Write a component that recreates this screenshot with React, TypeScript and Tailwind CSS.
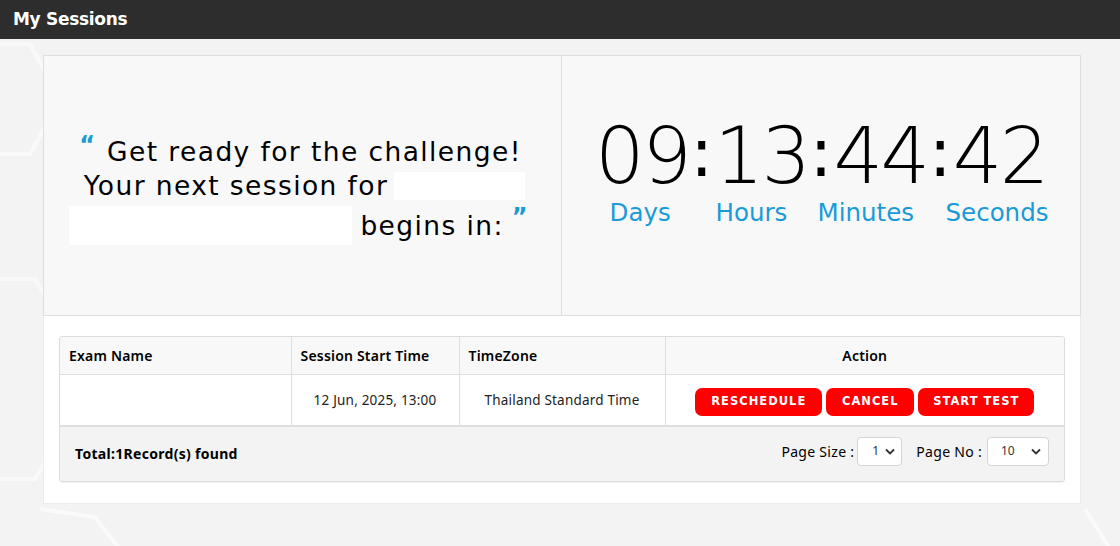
import React from "react";

const F = { fontFamily: '"DejaVu Sans", "Noto Sans", sans-serif' };
const T = { fontFamily: '"Noto Sans", "DejaVu Sans", sans-serif' };

export default function App() {
  return (
    <div className="w-[1120px] h-[546px] bg-[#f3f3f3] overflow-hidden relative" style={F}>
      <svg className="absolute left-0 top-[39px]" width="1120" height="507" viewBox="0 0 1120 507" fill="none">
        <g stroke="#ffffff" strokeWidth="4" opacity="0.55">
          <path d="M-20 5 L30 5 L60 60 L30 115 L-20 115" />
          <path d="M40 0 L50 -20 L320 -20 L330 0" />
          <path d="M-20 240 L35 240 L95 340 L35 440 L-20 440" />
          <path d="M40 470 L95 478 L135 530" />
          <path d="M1085 470 L1110 510" />
        </g>
      </svg>
      <div className="relative h-[39px] bg-[#2d2d2d] flex items-center px-[13px]">
        <span className="text-white font-bold text-[17px] tracking-[-0.3px]">My Sessions</span>
      </div>
      <div className="relative pl-[43px] pr-[39px] pt-[16px]">
        <div className="bg-white border border-[#ececec]">
          <div className="flex h-[261px] border border-[#dedede] bg-[#f8f8f8] -m-px">
            <div className="w-[518px] border-r border-[#dedede] flex flex-col items-center justify-center pt-[9px]">
              <div className="w-[470px] text-[26.5px] tracking-[1.4px] text-black">
                <div className="flex justify-center items-start h-[34px] -ml-[4px]">
                  <span className="text-[#1a9bd7] font-bold text-[24px] leading-[20px] mr-[12px] tracking-normal">“</span>
                  <span className="leading-[34px]">Get ready for the challenge!</span>
                </div>
                <div className="flex justify-center items-center h-[34px] pl-[4px]">
                  <span className="leading-[34px]">Your next session for</span>
                  <span className="inline-block bg-white w-[131px] h-[28px] ml-[6px]" />
                </div>
                <div className="flex justify-center items-center h-[40px] mt-[3px] -ml-[8px]">
                  <span className="inline-block bg-white w-[283px] h-[39px]" />
                  <span className="ml-[8px] leading-[34px]">begins in:</span>
                  <span className="text-[#1a9bd7] font-bold text-[24px] ml-[8px] self-start leading-[22px] tracking-normal">”</span>
                </div>
              </div>
            </div>
            <div className="flex-1 flex flex-col items-center justify-start pt-[64px]">
              <div className="flex items-center text-[78px] leading-[66px] text-black">
                <span className="font-extralight tracking-[-2.5px]">09</span>
                <span className="font-normal text-[68px] mx-[1px] mb-[6px]">:</span>
                <span className="font-extralight tracking-[-2.5px]">13</span>
                <span className="font-normal text-[68px] mx-[1px] mb-[6px]">:</span>
                <span className="font-extralight tracking-[-2.5px]">44</span>
                <span className="font-normal text-[68px] mx-[1px] mb-[6px]">:</span>
                <span className="font-extralight tracking-[-2.5px]">42</span>
              </div>
              <div className="flex text-[24.5px] text-[#1a9bd7] mt-[7px] ml-[16px] leading-[28px]">
                <span className="w-[106px]">Days</span>
                <span className="w-[102px]">Hours</span>
                <span className="w-[128px]">Minutes</span>
                <span>Seconds</span>
              </div>
            </div>
          </div>
          <div className="px-[15px] pt-[21px] pb-[21px]" style={T}>
            <div className="border border-[#dcdcdc] rounded-[3px] overflow-hidden shadow-[0_1px_1px_rgba(0,0,0,0.05)]">
              <table className="w-full border-collapse text-[14px] tracking-[0.2px]">
                <thead>
                  <tr className="bg-[#f8f8f8] h-[37px] font-semibold text-black">
                    <td className="w-[231px] pl-[9px] border-r border-b border-[#dedede]">Exam Name</td>
                    <td className="w-[168px] pl-[9px] border-r border-b border-[#dedede]">Session Start Time</td>
                    <td className="w-[206px] pl-[9px] border-r border-b border-[#dedede]">TimeZone</td>
                    <td className="text-center border-b border-[#dedede]">Action</td>
                  </tr>
                </thead>
                <tbody>
                  <tr className="bg-white h-[51px] text-[#222] text-[13.5px]">
                    <td className="border-r border-[#dedede]" />
                    <td className="text-center border-r border-[#dedede]">12 Jun, 2025, 13:00</td>
                    <td className="text-center border-r border-[#dedede]">Thailand Standard Time</td>
                    <td>
                      <div className="flex justify-center gap-[4px] pt-[4px]" style={F}>
                        <button className="bg-[#ff0000] text-white text-[11.5px] font-bold tracking-[1px] rounded-[7px] h-[28px] w-[127px]">RESCHEDULE</button>
                        <button className="bg-[#ff0000] text-white text-[11.5px] font-bold tracking-[1px] rounded-[7px] h-[28px] w-[88px]">CANCEL</button>
                        <button className="bg-[#ff0000] text-white text-[11.5px] font-bold tracking-[1px] rounded-[7px] h-[28px] w-[116px]">START TEST</button>
                      </div>
                    </td>
                  </tr>
                </tbody>
              </table>
              <div className="bg-[#f3f3f3] border-t-2 border-[#dedede] h-[56px] flex items-center justify-between pl-[15px] pr-[15px]">
                <span className="font-bold text-[14px] text-black tracking-[0.3px] mt-[-1px]">Total:1Record(s) found</span>
                <div className="flex items-center text-[14px] text-black mb-[6px]">
                  <span className="tracking-[0.3px]">Page Size :</span>
                  <div className="ml-[3px] w-[45px] h-[29px] bg-white border border-[#d4d4d4] rounded-[4px] flex items-center justify-between pl-[14px] pr-[6px] text-[12px] text-[#333]">
                    <span>1</span><ChevronDown />
                  </div>
                  <span className="ml-[14px] tracking-[0.3px]">Page No :</span>
                  <div className="ml-[5px] w-[62px] h-[29px] bg-white border border-[#d4d4d4] rounded-[4px] flex items-center justify-between pl-[13px] pr-[7px] text-[12px] text-[#333]">
                    <span>10</span><ChevronDown />
                  </div>
                </div>
              </div>
            </div>
          </div>
        </div>
      </div>
    </div>
  );
}

function ChevronDown() {
  return (
    <svg width="10" height="7" viewBox="0 0 10 7" fill="none">
      <path d="M1 1.5 L5 5.5 L9 1.5" stroke="#333" strokeWidth="1.8" />
    </svg>
  );
}
